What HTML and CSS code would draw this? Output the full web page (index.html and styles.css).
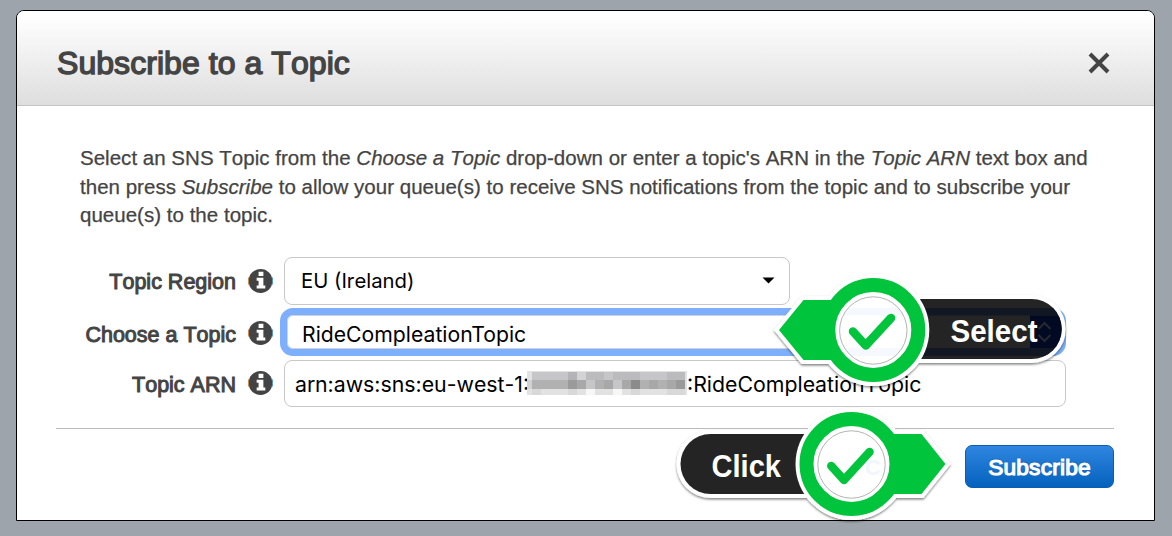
FILE: index.html
```html
<!DOCTYPE html>
<html lang="en">
<head>
<meta charset="utf-8">
<title>Subscribe to a Topic</title>
<link rel="stylesheet" href="styles.css">
</head>
<body>
<svg class="defs" aria-hidden="true">
  <symbol id="info" viewBox="0 0 26 26">
    <circle cx="13" cy="13" r="12.4" fill="#434343"/>
    <path d="M.9 9a12.4 12.4 0 0 0 0 8" fill="none" stroke="#c9803f" stroke-width="1"/>
    <path d="M25.1 9a12.4 12.4 0 0 1 0 8" fill="none" stroke="#3f8cd0" stroke-width="1"/>
    <path d="M11 3.5h5v4.2h-5zM9 9.7h7v8h2v3H9v-3h2v-5H9z" fill="#fff"/>
  </symbol>
</svg>
<main class="dialog">
  <header class="dialog-header">
    <h1 class="title">Subscribe to a Topic</h1>
    <svg class="close" viewBox="0 0 22 22"><path d="M2 2 20 20M20 2 2 20" stroke="#444" stroke-width="4"/></svg>
  </header>
  <section class="dialog-body">
    <p class="intro">
      <span class="line">Select an SNS Topic from the <i>Choose a Topic</i> drop-down or enter a topic's ARN in the <i>Topic ARN</i> text box and</span>
      <span class="line">then press <i>Subscribe</i> to allow your queue(s) to receive SNS notifications from the topic and to subscribe your</span>
      <span class="line">queue(s) to the topic.</span>
    </p>
    <div class="form">
      <div class="row">
        <span class="label">Topic Region</span>
        <svg class="info"><use href="#info"/></svg>
        <div class="field region"><span>EU (Ireland)</span><svg class="caret" viewBox="0 0 12 7"><path d="M0 .5h12L6 6.5z"/></svg></div>
      </div>
      <div class="row row-topic">
        <span class="label">Choose a Topic</span>
        <svg class="info"><use href="#info"/></svg>
        <div class="topic">RideCompleationTopic</div>
      </div>
      <div class="row">
        <span class="label">Topic ARN</span>
        <svg class="info"><use href="#info"/></svg>
        <div class="field arn"><span class="arn-start">arn:aws:sns:eu-west-1:</span><svg class="mosaic" viewBox="0 0 160 24" shape-rendering="crispEdges">
          <path fill="#e2e2e3" d="M0 0h160v24H0z"/>
          <path fill="#d2d2d3" d="M0 9h5v9H0z"/>
          <path fill="#c6c6c8" d="M5 1h153v8H5zM59 9h9v9h-9zM86 9h9v9h-9z"/>
          <path fill="#bbbbbd" d="M59 1h18v8H59zM86 1h27v8H86zM140 1h18v8h-18z"/>
          <path fill="#b4b4b6" d="M41 1h9v8h-9z"/>
          <path fill="#d3d3d5" d="M50 1h9v8h-9z"/>
          <path fill="#b1b1b1" d="M5 9h36v9H5zM68 9h9v9h-9zM113 9h9v9h-9zM131 9h9v9h-9z"/>
          <path fill="#a8a8a8" d="M50 9h9v9h-9zM77 9h9v9h-9zM95 9h9v9h-9zM122 9h9v9h-9zM140 9h9v9h-9z"/>
          <path fill="#9a9a9a" d="M41 9h9v9h-9zM149 9h9v9h-9z"/>
          <path fill="#8b8b8b" d="M104 9h9v9h-9z"/>
          <path fill="#d8d8d8" d="M5 18h9v6H5zM41 18h9v6h-9zM104 18h9v6h-9zM140 18h18v6h-18z"/>
          <path fill="#f7f7f7" d="M59 18h9v6h-9zM86 18h9v6h-9z"/>
        </svg><span class="arn-end">:RideCompleationTopic</span></div>
      </div>
    </div>
    <footer class="actions"><button class="subscribe">Subscribe</button></footer>
  </section>
</main>
<svg class="callouts" viewBox="0 0 1172 536">
  <defs>
    <filter id="shadow" x="-10%" y="-10%" width="120%" height="125%"><feDropShadow dx="0" dy="1.5" stdDeviation="1.3" flood-color="#000" flood-opacity=".5"/></filter>
    <clipPath id="pill"><path d="M873 299h158.700a30 30 0 0 1 0 60H873z"/></clipPath>
    <clipPath id="disc"><circle cx="873.300" cy="330" r="34"/></clipPath>
  </defs>
  <g filter="url(#shadow)">
    <path d="M873 299h158.700a30 30 0 0 1 0 60H873zM873 300H803.500L779 330l24.500 30H873z" fill="#fff" stroke="#fff" stroke-width="8"/>
    <circle cx="873.300" cy="330" r="56" fill="#fff"/>
  </g>
  <g clip-path="url(#pill)">
    <path d="M873 299h190v60H873z" fill="#242424"/>
    <path d="M873 308h190v7.500H873zM873 348h190v8H873z" fill="#111824"/>
    <path d="M1030 315.500h33V348h-33z" fill="#020a23"/>
    <path d="m1038.500 329 6-6 6 6M1038.500 335l6 6 6-6" fill="none" stroke="#252a2e" stroke-width="2"/>
  </g>
  <circle cx="873.300" cy="330" r="56" fill="#fff"/>
  <path d="M850 300H803.500L779 330l24.500 30H850z" fill="#00c43c"/>
  <circle cx="873.300" cy="330" r="45" fill="#fff" stroke="#00c43c" stroke-width="14"/>
  <path clip-path="url(#disc)" d="M838 308h70v7.500h-70zM838 348h70v8h-70z" fill="#f5f9ff"/>
  <circle cx="873.300" cy="330.500" r="33.700" fill="none" stroke="#b4b4b4" stroke-width="1"/>
  <path d="M853 331.500 865.700 345.500 891 318" fill="none" stroke="#00c43c" stroke-width="8.500" stroke-linecap="round" stroke-linejoin="round"/>
  <text x="950.500" y="342" textLength="87" lengthAdjust="spacingAndGlyphs" class="callout-text">Select</text>

  <g filter="url(#shadow)">
    <path d="M851 434H710.500a30 30 0 0 0 0 60H851zM851 434h70.500l24 30-24 30H851z" fill="#fff" stroke="#fff" stroke-width="8"/>
    <circle cx="851.500" cy="464" r="56" fill="#fff"/>
  </g>
  <path d="M851 434H710.500a30 30 0 0 0 0 60H851z" fill="#242424"/>
  <circle cx="851.500" cy="464" r="56" fill="#fff"/>
  <path d="M875 434h46.500l24 30-24 30H875z" fill="#00c43c"/>
  <circle cx="851.500" cy="464" r="45" fill="#fff" stroke="#00c43c" stroke-width="14"/>
  <text x="865" y="475" class="ghost">C</text>
  <circle cx="851.500" cy="464.500" r="33.700" fill="none" stroke="#b4b4b4" stroke-width="1"/>
  <path d="M831.300 466 844 480 869.500 452" fill="none" stroke="#00c43c" stroke-width="8.500" stroke-linecap="round" stroke-linejoin="round"/>
  <text x="711.500" y="476.500" textLength="69.500" lengthAdjust="spacingAndGlyphs" class="callout-text">Click</text>
</svg>
</body>
</html>
```

FILE: styles.css
```css
* { box-sizing: border-box; }
body { margin: 0; width: 1172px; height: 536px; overflow: hidden; padding: 10px 0 0 16px; background: #9ea4ab; font-family: "Liberation Sans", Arial, sans-serif; color: #444; font-kerning: none; }
.defs { display: none; }
.dialog { width: 1139px; height: 511px; background: #fff; border: 1px solid #000; border-radius: 8px 8px 0 0; overflow: hidden; }
.dialog-header { display: flex; justify-content: space-between; align-items: center; height: 95px; padding: 9px 44px 0 40px; border-bottom: 1px solid #c4c4c4; background: linear-gradient(#fff 5%, #dedede); }
.title { margin: 0; padding-top: 2px; font-size: 32px; font-weight: 400; letter-spacing: .06px; -webkit-text-stroke: 1.400px #444; white-space: nowrap; }
.close { width: 22px; height: 22px; }
.dialog-body { padding: 38px 40px 0 39px; }
.intro { margin: 0 0 0 24px; font-size: 20.500px; line-height: 28.500px; letter-spacing: .02px; -webkit-text-stroke: .25px #444; }
.line { display: block; white-space: nowrap; }
.form { display: flex; flex-direction: column; gap: 3.500px; padding-top: 27.500px; }
.row { display: flex; align-items: center; }
.label { width: 180px; margin-right: 12px; padding-top: 4px; text-align: right; font-size: 21.500px; -webkit-text-stroke: 1px #444; white-space: nowrap; }
.row-topic .label { padding-top: 6px; }
.info { width: 25px; height: 26px; flex: none; }
.row-topic .info { margin-top: 2px; }
.field { height: 47.500px; margin-left: 11px; border: 1px solid #c8c8c8; border-radius: 8px; display: flex; align-items: center; font-family: Inter, sans-serif; color: #000; font-size: 20.300px; white-space: nowrap; }
.region { width: 506px; padding: 0 14px 0 16px; justify-content: space-between; }
.caret { width: 13px; height: 7px; }
.topic { width: 786px; height: 48px; margin-left: 7px; padding: 4px 0 0 15px; border: 7px solid #7eaffc; border-radius: 13px; background: #fff; display: flex; align-items: center; font-family: Inter, sans-serif; font-size: 21.200px; font-kerning: normal; color: #000; box-shadow: inset 0 0 0 1px #c9d3e2; }
.arn { width: 782px; padding-left: 10px; font-size: 21.300px; }
.arn span { padding-top: 2px; }
.arn-start { width: 232px; flex: none; }
.mosaic { width: 160px; height: 24px; flex: none; }
.actions { display: flex; justify-content: flex-end; margin-top: 21px; padding-top: 16px; border-top: 1px solid #bbb; }
.subscribe { width: 149px; height: 43px; padding: 2px 0 0; border: 1px solid #0a5cb4; border-radius: 7px; background: linear-gradient(#2f86e0, #0462bd); color: #fff; font: 22.700px "Liberation Sans", Arial, sans-serif; letter-spacing: .2px; -webkit-text-stroke: 1.200px #fff; text-shadow: 0 -1px 1px #0b4f99; }
.callouts { position: absolute; left: 0; top: 0; width: 1172px; height: 536px; }
.callout-text { font: 700 30.500px "Liberation Sans", Arial, sans-serif; fill: #fff; }
.ghost { font: 700 22px "Liberation Sans", Arial, sans-serif; fill: #f0f6fc; }
```
